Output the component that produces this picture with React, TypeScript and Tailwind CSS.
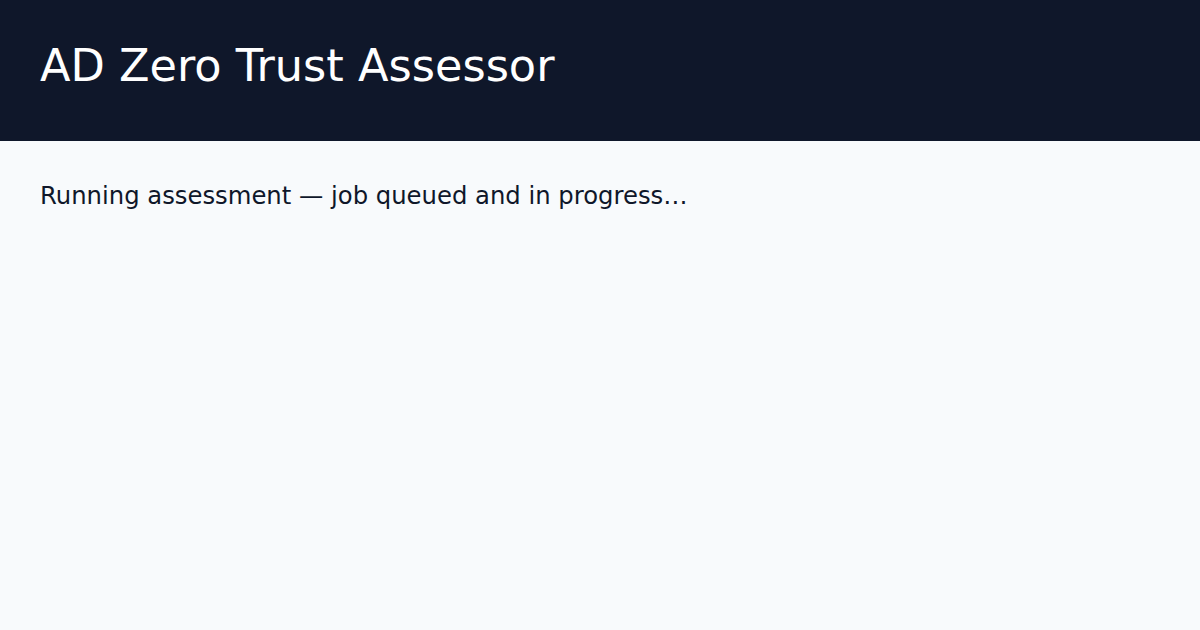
export default function App() {
  return (
    <div className="min-h-[630px] bg-[#f8fafc] font-['DejaVu_Sans',sans-serif]">
      <header className="h-[141px] bg-[#0f172a] px-10 pt-[44px]">
        <h1 className="text-[44.6px] text-white leading-none">AD Zero Trust Assessor</h1>
      </header>
      <main className="px-10 pt-[43px]">
        <p className="text-[24.3px] text-[#0f172a] leading-none">Running assessment — job queued and in progress…</p>
      </main>
    </div>
  )
}
